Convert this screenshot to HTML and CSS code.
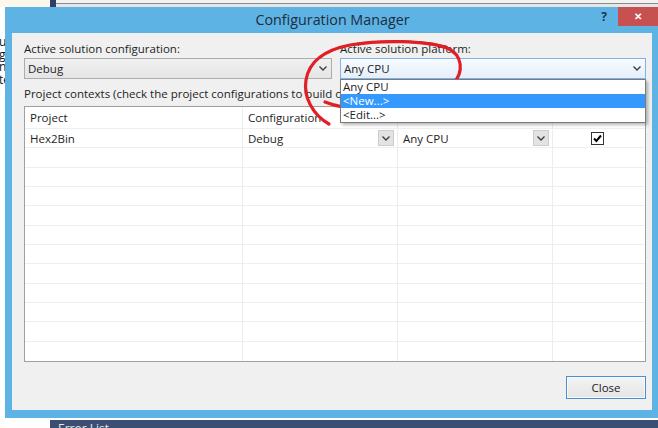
FILE: index.html
```html
<!DOCTYPE html>
<html>
<head>
<meta charset="utf-8">
<title>Configuration Manager</title>
<link rel="stylesheet" href="styles.css">
</head>
<body>
<div class="topstrip"><div class="ts-cream"></div><div class="ts-navy"></div><div class="ts-gray"></div></div>
<div class="middle">
  <div class="leftedge"><span>us</span><span>g</span><span>n</span><span>te</span></div>
  <div class="window">
    <div class="titlebar">
      <div class="title">Configuration Manager</div>
      <div class="tb-buttons"><span class="help">?</span><span class="close">✕</span></div>
    </div>
    <div class="client">
      <div class="toprow">
        <div class="field">
          <div class="label">Active solution configuration:</div>
          <div class="combo"><span>Debug</span><svg class="chev" width="8" height="5" viewBox="0 0 8 5"><polyline points="0.5,0.5 4,4 7.5,0.5" fill="none" stroke="#3a3a3a" stroke-width="1.3"/></svg></div>
        </div>
        <div class="field">
          <div class="label">Active solution platform:</div>
          <div class="combo combo-open"><span>Any CPU</span><svg class="chev" width="8" height="5" viewBox="0 0 8 5"><polyline points="0.5,0.5 4,4 7.5,0.5" fill="none" stroke="#3a3a3a" stroke-width="1.3"/></svg>
            <ul class="droplist">
              <li>Any CPU</li>
              <li class="sel">&lt;New...&gt;</li>
              <li>&lt;Edit...&gt;</li>
            </ul>
          </div>
        </div>
      </div>
      <div class="ctx-label">Project contexts (check the project configurations to build or deploy):</div>
      <div class="grid">
        <div class="cell head">Project</div><div class="cell head">Configuration</div><div class="cell head">Platform</div><div class="cell head">Build</div>
        <div class="cell">Hex2Bin</div>
        <div class="cell pick"><span>Debug</span><span class="dd"><svg width="8" height="5" viewBox="0 0 8 5"><polyline points="0.5,0.5 4,4 7.5,0.5" fill="none" stroke="#3a3a3a" stroke-width="1.3"/></svg></span></div>
        <div class="cell pick"><span>Any CPU</span><span class="dd"><svg width="8" height="5" viewBox="0 0 8 5"><polyline points="0.5,0.5 4,4 7.5,0.5" fill="none" stroke="#3a3a3a" stroke-width="1.3"/></svg></span></div>
        <div class="cell center"><svg class="check" width="13" height="13" viewBox="0 0 13 13"><rect x="0.5" y="0.5" width="12" height="12" fill="#fff" stroke="#333"/><polyline points="3,6.5 5.4,9 10,3.5" fill="none" stroke="#000" stroke-width="2"/></svg></div>
        <div class="cell"></div><div class="cell"></div><div class="cell"></div><div class="cell"></div>
        <div class="cell"></div><div class="cell"></div><div class="cell"></div><div class="cell"></div>
        <div class="cell"></div><div class="cell"></div><div class="cell"></div><div class="cell"></div>
        <div class="cell"></div><div class="cell"></div><div class="cell"></div><div class="cell"></div>
        <div class="cell"></div><div class="cell"></div><div class="cell"></div><div class="cell"></div>
        <div class="cell"></div><div class="cell"></div><div class="cell"></div><div class="cell"></div>
        <div class="cell"></div><div class="cell"></div><div class="cell"></div><div class="cell"></div>
        <div class="cell"></div><div class="cell"></div><div class="cell"></div><div class="cell"></div>
        <div class="cell"></div><div class="cell"></div><div class="cell"></div><div class="cell"></div>
        <div class="cell"></div><div class="cell"></div><div class="cell"></div><div class="cell"></div>
        <div class="cell last"></div><div class="cell last"></div><div class="cell last"></div><div class="cell last"></div>
      </div>
      <div class="footer"><button class="btn">Close</button></div>
    </div>
  </div>
</div>
<div class="bottom"><div class="b-white"></div><div class="b-navy">Error List</div></div>
<svg class="annot" width="658" height="428" viewBox="0 0 658 428">
  <path d="M329,124 C313,115 303,97 306,80 C309,62 324,50 350,45 C380,40 425,40 447,48 C463,55 464,72 453,84 C441,96 411,104 381,108 C360,110 340,108 325,102" fill="none" stroke="#e11f26" stroke-width="3.2" stroke-linecap="round"/>
  <path d="M311,66 C322,52 340,46 362,43 C395,40 430,41 447,47" fill="none" stroke="#e11f26" stroke-width="2" stroke-linecap="round"/>
</svg>
</body>
</html>
```
FILE: styles.css
```css
* { box-sizing: border-box; }
html, body { margin: 0; padding: 0; }
body {
  width: 658px;
  height: 428px;
  overflow: hidden;
  position: relative;
  background: #fff;
  font-family: "Open Sans", "Noto Sans", sans-serif;
  font-size: 11.5px;
  color: #1e1e1e;
}
.topstrip { display: flex; height: 7px; }
.ts-cream { width: 50px; background: #fbf7ea; }
.ts-navy { width: 6px; background: #2d3f66; }
.ts-gray { flex: 1; background: linear-gradient(#f2f2f2 0 3px, #8a8a8a 3px 4px, #e6e6e6 4px); }

.middle { display: flex; height: 411px; }
.leftedge {
  width: 5px;
  flex: none;
  overflow: hidden;
  padding-top: 29px;
  font-size: 12px;
  line-height: 12.5px;
  color: #111;
  white-space: nowrap;
}
.leftedge span { display: block; margin-left: -1px; }

.window {
  width: 655px;
  flex: none;
  background: #5db3e4;
  display: flex;
  flex-direction: column;
}
.titlebar { display: grid; height: 26px; }
.title, .tb-buttons { grid-area: 1 / 1; }
.title {
  text-align: center;
  font-size: 14.3px;
  line-height: 26px;
  color: #1c2c3e;
}
.tb-buttons { justify-self: end; display: flex; align-items: flex-start; padding-right: 2px; }
.help {
  width: 28px;
  height: 19px;
  text-align: center;
  font-weight: bold;
  font-size: 12px;
  line-height: 19px;
  color: #23364b;
}
.close {
  width: 40px;
  height: 19px;
  background: #c75050;
  color: #fff;
  text-align: center;
  font-size: 10px;
  font-weight: bold;
  line-height: 19px;
}

.client {
  flex: 1;
  margin: 0 8px 8px 7px;
  background: #f0f0f0;
  padding: 8px 6px 0 12px;
  display: flex;
  flex-direction: column;
}
.toprow { display: grid; grid-template-columns: 308px 306px; column-gap: 8px; }
.label { height: 17px; line-height: 15px; }
.combo {
  position: relative;
  height: 21px;
  border: 1px solid #acacac;
  background: linear-gradient(#f0f0f0, #e5e5e5);
  display: flex;
  align-items: center;
  justify-content: space-between;
  padding: 0 4px 0 3px;
}
.combo-open {
  border-color: #7eb4ea;
  background: linear-gradient(#f7fbff, #e5effa);
}
.droplist {
  position: absolute;
  top: calc(100% + 1px);
  left: -1px;
  right: -1px;
  margin: 0;
  padding: 0;
  list-style: none;
  background: #fff;
  border: 1px solid #7a7a7a;
  box-shadow: 2px 2px 3px rgba(0,0,0,0.28);
  z-index: 2;
}
.droplist li { height: 14px; line-height: 14px; padding-left: 2px; }
.droplist li.sel { background: #3399ff; color: #fff; }

.ctx-label { margin-top: 7px; line-height: 15px; height: 20px; white-space: nowrap; }

.grid {
  height: 256px;
  border: 1px solid #a0a0a0;
  background: #fff;
  display: grid;
  grid-template-columns: 218px 155px 155px 1fr;
  grid-template-rows: 22px repeat(12, 1fr);
}
.cell {
  border-right: 1px solid #ececec;
  border-bottom: 1px solid #efefef;
  padding-left: 5px;
  display: flex;
  align-items: center;
  white-space: nowrap;
}
.cell:nth-child(4n) { border-right: none; }
.cell.last { border-bottom: none; }
.pick { justify-content: space-between; padding-right: 3px; }
.dd {
  width: 16px;
  height: 16px;
  background: #e3e3e3;
  border: 1px solid #cdcdcd;
  display: flex;
  align-items: center;
  justify-content: center;
}
.center { justify-content: center; padding-left: 0; padding-right: 4px; }

.footer { display: flex; justify-content: flex-end; margin-top: 14px; }
.btn {
  width: 80px;
  height: 23px;
  border: 1px solid #4b8fd0;
  background: linear-gradient(#f3f3f3, #e5e5e5);
  box-shadow: inset 0 0 0 1px #f8fbfe;
  font-family: inherit;
  font-size: 11.5px;
  color: #222;
  padding: 0;
}

.bottom { display: flex; height: 10px; }
.b-white { width: 50px; }
.b-navy {
  flex: 1;
  margin-top: 2px;
  background: #3c4e72;
  color: #e8e8e8;
  font-size: 12px;
  line-height: 14px;
  padding: 2px 0 0 8px;
  overflow: hidden;
}

.annot { position: absolute; left: 0; top: 0; pointer-events: none; }
```
